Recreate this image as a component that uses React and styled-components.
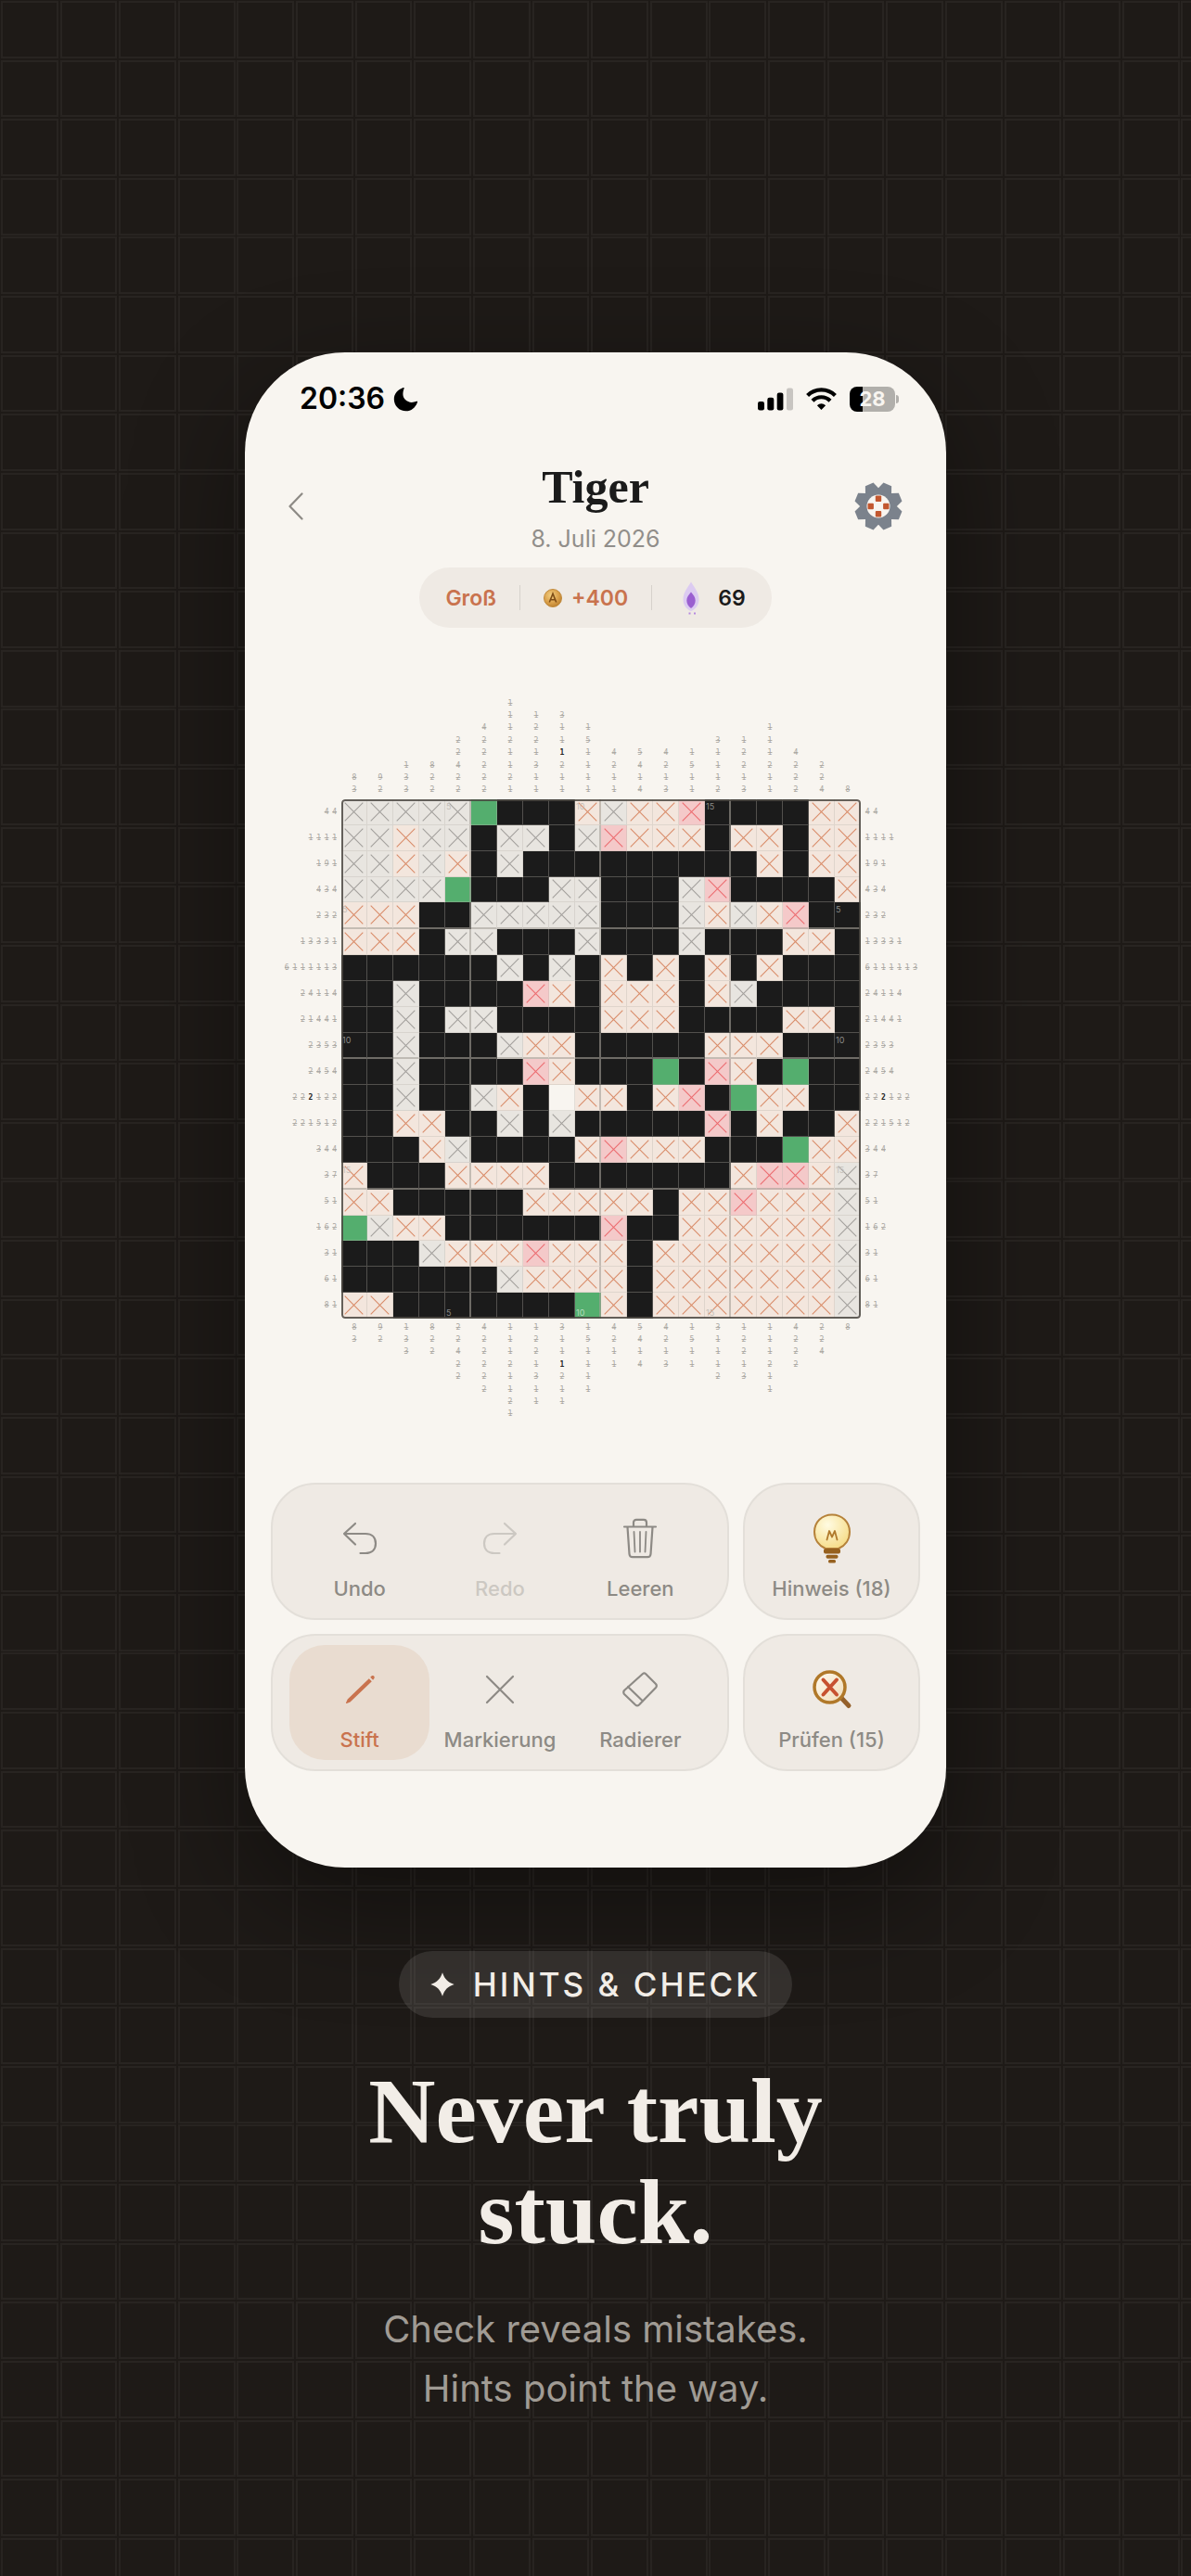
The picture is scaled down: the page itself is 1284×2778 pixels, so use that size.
import React from 'react';
import styled, { createGlobalStyle, css } from 'styled-components';

const ink = '#1b1b1b';
const muted = '#8d8a85';
const accent = '#c9734e';
const paper = '#f8f5f0';
const panel = '#efeae4';
const sans = 'Inter, "Liberation Sans", sans-serif';
const serif = '"Liberation Serif", serif';
const mono = '"DejaVu Sans Mono", "Liberation Mono", monospace';

const tile = encodeURIComponent(
  '<svg xmlns="http://www.w3.org/2000/svg" width="64" height="64" viewBox="0 0 64 64"><rect x="2" y="2" width="60" height="60" fill="none" stroke="#282421" stroke-width="2"/></svg>'
);

const GlobalStyle = createGlobalStyle`
  *, *::before, *::after { box-sizing: border-box; }
  body {
    margin: 0;
    background: #1e1a17 url("data:image/svg+xml,${tile}") 0 0 / calc(700px / 11) calc(700px / 11);
    font-family: ${sans};
    color: ${ink};
  }
  button { font: inherit; color: inherit; border: 0; padding: 0; background: none; }
`;

const Page = styled.main`
  display: flex;
  flex-direction: column;
  align-items: center;
  min-height: 100vh;
  padding: 380px 24px 120px;
`;

const Phone = styled.section`
  width: 100%;
  max-width: 756px;
  padding: 30px 28px 104px;
  border-radius: 108px;
  background: ${paper};
  box-shadow: 0 40px 120px rgba(0, 0, 0, 0.4);
`;

const StatusBar = styled.div`
  display: flex;
  align-items: center;
  justify-content: space-between;
  height: 40px;
  padding: 0 23px 0 31px;
`;

const StatusGroup = styled.div`
  display: flex;
  align-items: center;
  gap: ${(p) => p.$gap}px;
`;

const Time = styled.span`
  font-size: 32px;
  font-weight: 600;
  line-height: 40px;
  color: #000;
`;

const Battery = styled.span`
  display: flex;
  align-items: center;
  gap: 1px;
  &::after {
    content: '';
    width: 3px;
    height: 9px;
    border-radius: 0 3px 3px 0;
    background: #b1afab;
  }
`;

const BatteryBody = styled.span`
  width: 49px;
  height: 27px;
  border-radius: 8px;
  background: linear-gradient(90deg, #000 14px, #b1afab 14px);
  color: ${paper};
  font-size: 22px;
  font-weight: 700;
  line-height: 27px;
  text-align: center;
`;

const Header = styled.header`
  display: grid;
  grid-template-columns: 56px 1fr 56px;
  align-items: center;
  margin-top: 45px;
  padding: 0 19px;
`;

const TitleBlock = styled.div`
  display: flex;
  flex-direction: column;
  gap: 10px;
  align-items: center;
`;

const Title = styled.h1`
  margin: 0;
  font-family: ${serif};
  font-size: 50px;
  font-weight: 700;
  line-height: 60px;
`;

const DateLine = styled.p`
  margin: 0;
  font-size: 25px;
  line-height: 32px;
  color: #918e8a;
`;

const IconButton = styled.button`
  display: flex;
  align-items: center;
  justify-content: ${(p) => p.$side};
  height: 56px;
`;

const Stats = styled.div`
  display: flex;
  align-items: center;
  justify-content: center;
  gap: 25px;
  width: fit-content;
  height: 65px;
  margin: 15px auto 0;
  padding: 0 28px;
  border-radius: 33px;
  background: ${panel};
  font-size: 23px;
  font-weight: 600;
`;

const Stat = styled.span`
  display: flex;
  align-items: center;
  gap: ${(p) => p.$gap || 0}px;
  color: ${(p) => (p.$accent ? accent : ink)};
`;

const Divider = styled.span`
  width: 1px;
  height: 27px;
  background: #d6d2cc;
`;

const Puzzle = styled.section`
  display: grid;
  grid-template-columns: 60px minmax(0, 560px) 60px;
  justify-content: center;
  gap: 3px;
  margin: 75px 0 67px;
  padding-left: 12px;
  font-family: ${mono};
  font-size: 8px;
  color: #aaa7a2;
`;

const ColumnClues = styled.div`
  grid-column: 2;
  display: grid;
  grid-template-columns: repeat(20, 1fr);
  height: 107px;
`;

const RowClues = styled.div`
  grid-column: ${(p) => (p.$left ? 1 : 3)};
  display: grid;
  grid-template-rows: repeat(20, 1fr);
`;

const ClueLine = styled.div`
  display: grid;
  place-items: center;
  ${(p) =>
    p.$vertical
      ? css`grid-template-rows: repeat(8, 1fr);`
      : css`grid-template-columns: repeat(7, 1fr);`}
`;

const Clue = styled.span`
  line-height: 10px;
  ${(p) =>
    p.$open
      ? css`color: #222; font-weight: 700;`
      : css`text-decoration: line-through 1px rgba(165, 162, 157, 0.85);`}
`;

const Board = styled.div`
  position: relative;
  display: grid;
  grid-template-columns: repeat(20, 1fr);
  aspect-ratio: 1;
  border-radius: 4px;
  overflow: hidden;
  &::after {
    content: '';
    position: absolute;
    inset: 0;
    border: 2px solid rgba(75, 72, 66, 0.85);
    border-radius: 4px;
    pointer-events: none;
  }
`;

const tones = {
  '#': [ink, ink],
  g: ['#54ae6e', '#54ae6e'],
  o: ['#f3e6dd', '#d98c69'],
  e: ['#e8e5e0', '#a3a09c'],
  r: ['#f4c9c9', '#ec6c70'],
  '.': [paper, paper],
};

const Cell = styled.button`
  position: relative;
  display: grid;
  place-items: center;
  background: ${(p) => tones[p.$kind][0]};
  color: ${(p) => tones[p.$kind][1]};
  border: 0 solid rgba(185, 180, 172, 0.35);
  border-right-width: 1px;
  border-bottom-width: 1px;
  ${(p) => p.$majorX && css`border-right: 2px solid rgba(165, 160, 152, 0.6);`}
  ${(p) => p.$majorY && css`border-bottom: 2px solid rgba(165, 160, 152, 0.6);`}
`;

const Index = styled.span`
  position: absolute;
  left: 1px;
  ${(p) => (p.$bottom ? 'bottom: 0;' : 'top: 2px;')}
  font-family: ${sans};
  font-size: 9px;
  line-height: 11px;
  color: ${(p) => (p.$dark ? '#8a8a88' : p.$green ? '#b4dcbf' : '#c4bfb9')};
`;

const Controls = styled.div`
  display: grid;
  grid-template-columns: 494fr 191fr;
  gap: 15px;
`;

const Card = styled.div`
  display: grid;
  grid-auto-flow: column;
  grid-auto-columns: 1fr;
  height: 148px;
  padding: 10px ${(p) => (p.$wide ? 18 : 0)}px;
  border: 2px solid #e3dfd9;
  border-radius: 48px;
  background: ${panel};
`;

const Tool = styled.button`
  display: flex;
  flex-direction: column;
  align-items: center;
  justify-content: flex-end;
  gap: 14px;
  padding-bottom: 9px;
  border-radius: 38px;
  font-size: 22px;
  font-weight: 500;
  line-height: 26px;
  white-space: nowrap;
  color: ${(p) => (p.$active ? accent : muted)};
  background: ${(p) => (p.$active ? '#e9dcd0' : 'transparent')};
  opacity: ${(p) => (p.disabled ? 0.35 : 1)};
  svg { display: block; }
`;

const Badge = styled.p`
  display: flex;
  align-items: center;
  gap: 20px;
  height: 72px;
  margin: 90px 0 0;
  padding: 0 34px;
  border-radius: 36px;
  background: rgba(255, 255, 255, 0.1);
  color: #f2ede7;
  font-size: 35px;
  font-weight: 500;
  letter-spacing: 3px;
`;

const Headline = styled.h2`
  margin: 46px 0 0;
  font-family: ${serif};
  font-size: 100px;
  font-weight: 700;
  line-height: 109px;
  text-align: center;
  color: #f2ede7;
`;

const Subline = styled.p`
  margin: 40px 0 0;
  font-size: 40px;
  line-height: 64px;
  text-align: center;
  color: #a09b94;
`;

// # filled, g hinted, o player cross, e automatic cross, r wrong cross, . empty
const rows = [
  'eeeeeg###oeoor####oo',
  'eeoee#ee#erooo#oo#oo',
  'eeoeo#e#########o#oo',
  'eeeeg###ee###er####o',
  'ooo##eeeee###eoeor##',
  'ooo#ee###e###e###oo#',
  '######e#e#o#o#o#o###',
  '##e####ro#ooo#oe####',
  '##e#ee####ooo####oo#',
  '##e###eoo#####ooo###',
  '##e####ro###g#ro#g##',
  '##e##eo#.oo#or#goo##',
  '##oo##e#e#####r#o##o',
  '###oe####orooo###goo',
  'o###oooo#######orroe',
  'oo#####ooooo#ooroooe',
  'geoo######r##ooooooe',
  '###eooorooo#oooooooe',
  '######eoooo#oooooooe',
  'oo#######go#oooooooe',
];

const rowClues = [
  '44', '1111', '191', '434', '232', '13331', '6111113', '24114', '21441', '2353',
  '2454', '222122', '221512', '344', '37', '51', '162', '31', '61', '81',
];
const columnClues = [
  '83', '92', '133', '822', '22422', '422222', '11121121', '1221311', '3111211', '151111',
  '4211', '5414', '4213', '1511', '31112', '12213', '111211', '4222', '224', '8',
];

function Clues({ list, size, vertical, end, open }) {
  return list.map((digits, line) => {
    const start = end ? size - digits.length + 1 : 1;
    return (
      <ClueLine key={line} $vertical={vertical}>
        {[...digits].map((digit, i) => (
          <Clue
            key={i}
            $open={line === open[0] && i === open[1]}
            style={vertical ? { gridRow: start + i } : { gridColumn: start + i }}
          >
            {digit}
          </Clue>
        ))}
      </ClueLine>
    );
  });
}

const CrossMark = () => (
  <svg width="21" height="21" viewBox="0 0 21 21" stroke="currentColor" strokeWidth="1.1" aria-hidden="true">
    <path d="M.7 .7 20.3 20.3M20.3 .7 .7 20.3" />
  </svg>
);

function cellIndex(r, c) {
  if ((r === 0 || r === 19) && [4, 9, 14].includes(c)) return c + 1;
  if ((c === 0 || c === 19) && [4, 9, 14].includes(r)) return r + 1;
  return null;
}

function PuzzleGrid() {
  return (
    <Board>
      {rows.flatMap((row, r) =>
        [...row].map((kind, c) => {
          const index = cellIndex(r, c);
          return (
            <Cell
              key={`${r}-${c}`}
              $kind={kind}
              $majorX={c % 5 === 4 && c < 19}
              $majorY={r % 5 === 4 && r < 19}
              aria-label={`${r + 1}, ${c + 1}`}
            >
              {'oer'.includes(kind) && <CrossMark />}
              {index && (
                <Index $bottom={r === 19} $dark={kind === '#'} $green={kind === 'g'}>
                  {index}
                </Index>
              )}
            </Cell>
          );
        })
      )}
    </Board>
  );
}

const MoonIcon = () => (
  <svg width="27" height="27" viewBox="0 0 27 27" fill="#000" aria-hidden="true">
    <path d="M10.8 1.1C11.4.8 11.9 1.2 11.6 1.9 9.6 7.5 10.2 11.2 13 14.1 16 17.2 20.3 17.7 25.2 15.8 25.9 15.5 26.3 16 26 16.7 23.8 22.7 19.3 26.3 13.7 26.3 6.5 26.3.8 20.7.8 13.5.8 7.8 4.9 3.2 10.8 1.1Z" />
  </svg>
);

const SignalIcon = () => (
  <svg width="38" height="25" viewBox="0 0 38 25" aria-hidden="true">
    <rect x="0" y="15" width="7" height="9.5" rx="2.2" />
    <rect x="10.3" y="10.8" width="7" height="13.7" rx="2.2" />
    <rect x="20.7" y="5.5" width="6.7" height="19" rx="2.2" />
    <rect x="31" y=".5" width="7" height="24" rx="2.2" fill="#c8c5c1" />
  </svg>
);

const WifiIcon = () => (
  <svg width="33" height="25" viewBox="0 0 33 25" fill="none" stroke="#000" strokeWidth="4.2" aria-hidden="true">
    <path d="M1.6 8.6C9.7.4 23.3.4 31.4 8.6" />
    <path d="M7 14.2C12.2 8.9 20.8 8.9 26 14.2" />
    <path d="M11.9 19.2C14.6 16.5 18.4 16.5 21.1 19.2L16.5 24Z" fill="#000" stroke="none" />
  </svg>
);

const BackIcon = () => (
  <svg width="18" height="30" viewBox="0 0 18 30" fill="none" stroke={muted} strokeWidth="2.2" strokeLinecap="round" strokeLinejoin="round" aria-hidden="true">
    <path d="M14.5 1.5 1.5 15 14.5 28.5" />
  </svg>
);

const GearIcon = () => (
  <svg width="52" height="52" viewBox="-26 -26 52 52" aria-hidden="true">
    <g fill="#7b828c">
      {[0, 45, 90, 135, 180, 225, 270, 315].map((a) => (
        <path key={a} transform={`rotate(${a + 22.5})`} d="M-4.7 -25.6H4.7L7.7 -18V-6H-7.7V-18Z" />
      ))}
      <circle r="17.5" />
    </g>
    <circle r="12.5" fill={paper} />
    <g fill="#c2572f">
      <rect x="-3.2" y="-11.5" width="6.4" height="6.4" rx="1" />
      <rect x="-3.2" y="5.1" width="6.4" height="6.4" rx="1" />
      <rect x="-11.5" y="-3.2" width="6.4" height="6.4" rx="1" />
      <rect x="5.1" y="-3.2" width="6.4" height="6.4" rx="1" />
    </g>
  </svg>
);

const CoinIcon = () => (
  <svg width="20" height="20" viewBox="0 0 20 20" aria-hidden="true">
    <defs>
      <radialGradient id="coin" cx=".4" cy=".35" r=".7">
        <stop offset="0" stopColor="#f2cf82" />
        <stop offset=".6" stopColor="#daa04a" />
        <stop offset="1" stopColor="#b87d2c" />
      </radialGradient>
    </defs>
    <circle cx="10" cy="10" r="9.5" fill="url(#coin)" stroke="#c08a3c" />
    <path d="M6.3 14.5 10 5.2 13.7 14.5M7.6 11.7H12.4" fill="none" stroke="#7d4c16" strokeWidth="1.6" />
  </svg>
);

const FlameIcon = () => (
  <svg width="26" height="36" viewBox="-8 0 26 36" aria-hidden="true">
    <path d="M9 .5C13 7 17.5 12 17.5 19.5 17.5 25.5 14 30 9 32 4 30 .5 25.5.5 19.5.5 12 5 7 9 .5Z" fill="#dccbf1" />
    <path d="M9 11.5C11.5 14.5 13.7 16.8 13.7 20.5 13.7 24 12 27 9 29 6 27 4.3 24 4.3 20.5 4.3 16.8 6.5 14.5 9 11.5Z" fill="#9a5fd0" />
    <path d="M6.5 33.5h2v2h-2zM12 33.5h2v2h-2z" fill="#b78ae0" />
  </svg>
);

const Line = ({ children }) => (
  <svg width="40" height="54" viewBox="0 -5 40 54" fill="none" stroke="currentColor" strokeWidth="2.2" strokeLinecap="round" strokeLinejoin="round" aria-hidden="true">
    {children}
  </svg>
);

const UndoIcon = () => (
  <Line><path d="M15 6 3 17 15 28.5M3 17H26C33 17 37 21 37 27.5S33 38 26 38H20.5" /></Line>
);
const RedoIcon = () => (
  <Line><path d="M25 6 37 17 25 28.5M37 17H14C7 17 3 21 3 27.5S7 38 14 38H19.5" /></Line>
);
const TrashIcon = () => (
  <Line>
    <path d="M3 9.5H37M13 9V5C13 3 14.2 1.8 16 1.8H24C25.8 1.8 27 3 27 5V9M6.5 10 8.5 39C8.7 41 10 42.2 12 42.2H28C30 42.2 31.3 41 31.5 39L33.5 10" />
    <path d="M13.5 15 14.5 36.5M20 15V36.5M26.5 15 25.5 36.5" strokeWidth="1.8" />
  </Line>
);
const PencilIcon = () => (
  <svg width="40" height="54" viewBox="0 -5 40 54" fill="currentColor" aria-hidden="true">
    <path d="M29.8 10.2 32.8 13.2 9.5 35.5 5.8 37C5.2 37.2 4.8 36.8 5 36.2L6.7 32.6ZM31.2 8.8 32.8 7.3C34.3 6 36.7 8.3 35.4 9.9L34.1 11.7Z" />
  </svg>
);
const MarkIcon = () => (
  <Line><path d="M6 8 34 36M34 8 6 36" /></Line>
);
const EraserIcon = () => (
  <Line><path d="M23 5Q24.5 3.7 26 5L37 16Q38.7 18 37 20L19 38.5Q17 40.3 15 38.5L3 27Q1.5 25 3 23ZM7 19 23 34.5" /></Line>
);

const BulbIcon = () => (
  <svg width="42" height="54" viewBox="1 0 42 54" aria-hidden="true">
    <defs>
      <radialGradient id="bulb" cx=".38" cy=".3" r=".75">
        <stop offset="0" stopColor="#fffbe2" />
        <stop offset="1" stopColor="#f6dc86" />
      </radialGradient>
    </defs>
    <path d="M22 1.5C11 1.5 3 9.5 3 20 3 28.5 8 35 15 38H29C36 35 41 28.5 41 20 41 9.5 33 1.5 22 1.5Z" fill="url(#bulb)" stroke="#b6823a" strokeWidth="2" />
    <path d="M16.5 28.5 19 19 22 25.5 25 19 27.5 28.5" fill="none" stroke="#b07a2c" strokeWidth="1.8" strokeLinecap="round" strokeLinejoin="round" />
    <g fill="#96611f">
      <rect x="13" y="38" width="18" height="5.5" rx="2" />
      <rect x="15.5" y="44.8" width="13" height="4" rx="1.8" />
      <rect x="18" y="50" width="8" height="3.5" rx="1.5" />
    </g>
  </svg>
);

const CheckIcon = () => (
  <svg width="44" height="54" viewBox="0 -5 44 54" strokeLinecap="round" aria-hidden="true">
    <defs>
      <linearGradient id="lens" x1="0" y1="0" x2="1" y2="1">
        <stop offset="0" stopColor="#fffaf0" />
        <stop offset="1" stopColor="#f0dcb8" />
      </linearGradient>
    </defs>
    <path d="M32.5 31.5 40 39.5" stroke="#94602a" strokeWidth="5" />
    <circle cx="19.5" cy="19.5" r="16.5" fill="url(#lens)" stroke="#b07829" strokeWidth="3.5" />
    <path d="M12.5 11.5 27 27.5M27 11.5 12.5 27.5" stroke="#c75230" strokeWidth="4" />
  </svg>
);

const StarIcon = () => (
  <svg width="26" height="26" viewBox="0 0 26 26" fill="currentColor" aria-hidden="true">
    <path d="M13 .3C15.5 7.5 18.5 10.5 25.7 13 18.5 15.5 15.5 18.5 13 25.7 10.5 18.5 7.5 15.5.3 13 7.5 10.5 10.5 7.5 13 .3Z" />
  </svg>
);

export default function App() {
  return (
    <>
      <GlobalStyle />
      <Page>
        <Phone>
          <StatusBar>
            <StatusGroup $gap={9}>
              <Time>20:36</Time>
              <MoonIcon />
            </StatusGroup>
            <StatusGroup $gap={14}>
              <SignalIcon />
              <WifiIcon />
              <Battery><BatteryBody>28</BatteryBody></Battery>
            </StatusGroup>
          </StatusBar>

          <Header>
            <IconButton $side="flex-start" aria-label="Zurück"><BackIcon /></IconButton>
            <TitleBlock>
              <Title>Tiger</Title>
              <DateLine>8. Juli 2026</DateLine>
            </TitleBlock>
            <IconButton $side="flex-end" aria-label="Einstellungen"><GearIcon /></IconButton>
          </Header>

          <Stats>
            <Stat $accent>Groß</Stat>
            <Divider />
            <Stat $accent $gap={10}><CoinIcon />+400</Stat>
            <Divider />
            <Stat $gap={20}><FlameIcon />69</Stat>
          </Stats>

          <Puzzle>
            <ColumnClues><Clues list={columnClues} size={8} vertical end open={[8, 3]} /></ColumnClues>
            <RowClues $left><Clues list={rowClues} size={7} end open={[11, 2]} /></RowClues>
            <PuzzleGrid />
            <RowClues><Clues list={rowClues} size={7} open={[11, 2]} /></RowClues>
            <ColumnClues><Clues list={columnClues} size={8} vertical open={[8, 3]} /></ColumnClues>
          </Puzzle>

          <Controls>
            <Card $wide>
              <Tool><UndoIcon />Undo</Tool>
              <Tool disabled><RedoIcon />Redo</Tool>
              <Tool><TrashIcon />Leeren</Tool>
            </Card>
            <Card>
              <Tool><BulbIcon />Hinweis (18)</Tool>
            </Card>
            <Card $wide>
              <Tool $active><PencilIcon />Stift</Tool>
              <Tool><MarkIcon />Markierung</Tool>
              <Tool><EraserIcon />Radierer</Tool>
            </Card>
            <Card>
              <Tool><CheckIcon />Prüfen (15)</Tool>
            </Card>
          </Controls>
        </Phone>

        <Badge><StarIcon />HINTS &amp; CHECK</Badge>
        <Headline>Never truly<br />stuck.</Headline>
        <Subline>Check reveals mistakes.<br />Hints point the way.</Subline>
      </Page>
    </>
  );
}
